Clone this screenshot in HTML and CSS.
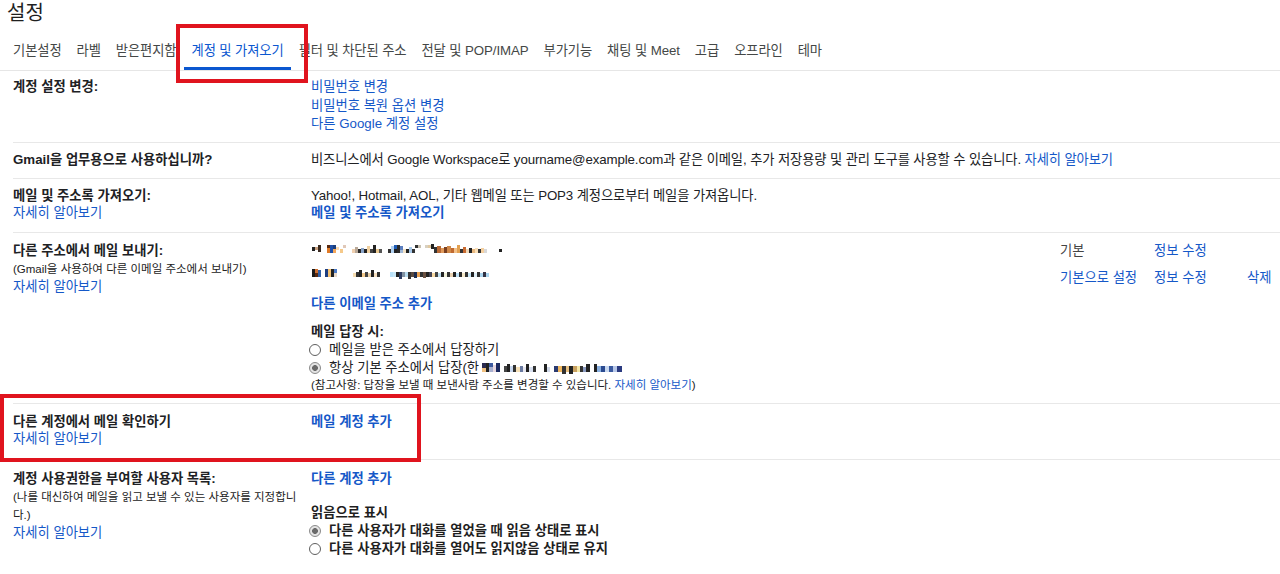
FILE: index.html
```html
<!DOCTYPE html>
<html lang="ko">
<head>
<meta charset="utf-8">
<title>설정</title>
<link rel="stylesheet" href="styles.css">
</head>
<body>
<div class="page">
  <h1 class="title">설정</h1>
  <nav class="tabs">
    <a class="tab">기본설정</a>
    <a class="tab">라벨</a>
    <a class="tab">받은편지함</a>
    <a class="tab active">계정 및 가져오기</a>
    <a class="tab">필터 및 차단된 주소</a>
    <a class="tab">전달 및 POP/IMAP</a>
    <a class="tab">부가기능</a>
    <a class="tab">채팅 및 Meet</a>
    <a class="tab">고급</a>
    <a class="tab">오프라인</a>
    <a class="tab">테마</a>
  </nav>

  <div class="rows">
    <div class="row row-first">
      <div class="label"><span class="lbl">계정 설정 변경:</span></div>
      <div class="content lines-185">
        <a class="link">비밀번호 변경</a>
        <a class="link">비밀번호 복원 옵션 변경</a>
        <a class="link">다른 Google 계정 설정</a>
      </div>
    </div>

    <div class="row">
      <div class="label"><span class="lbl">Gmail을 업무용으로 사용하십니까?</span></div>
      <div class="content">
        <p class="text">비즈니스에서 Google Workspace로 yourname@example.com과 같은 이메일, 추가 저장용량 및 관리 도구를 사용할 수 있습니다. <a class="link inline">자세히 알아보기</a></p>
      </div>
    </div>

    <div class="row row-tight">
      <div class="label">
        <span class="lbl">메일 및 주소록 가져오기:</span>
        <a class="link">자세히 알아보기</a>
      </div>
      <div class="content">
        <p class="text">Yahoo!, Hotmail, AOL, 기타 웹메일 또는 POP3 계정으로부터 메일을 가져옵니다.</p>
        <a class="link strong">메일 및 주소록 가져오기</a>
      </div>
    </div>

    <div class="row row-send">
      <div class="label">
        <span class="lbl">다른 주소에서 메일 보내기:</span>
        <span class="small">(Gmail을 사용하여 다른 이메일 주소에서 보내기)</span>
        <a class="link">자세히 알아보기</a>
      </div>
      <div class="content">
        <div class="sendas">
          <span class="addr">
            <svg class="mosaic" width="194" height="18" viewBox="0 0 194 18">
              <g transform="translate(0,1)">
              <rect x="1" y="4" width="3" height="4" fill="#222"/><rect x="4" y="4" width="3" height="3" fill="#c8a080"/><rect x="7" y="2" width="3" height="7" fill="#3a2a20"/>
              <rect x="16" y="2" width="3" height="3" fill="#5a2a10"/><rect x="16" y="5" width="3" height="5" fill="#e07b28"/><rect x="19" y="2" width="3" height="8" fill="#1f50a8"/><rect x="22" y="2" width="3" height="4" fill="#1b3f7d"/><rect x="22" y="6" width="3" height="4" fill="#f4a65a"/><rect x="25" y="4" width="3" height="3" fill="#f8d8b0"/>
              <rect x="29" y="6" width="3" height="4" fill="#f5c98a"/><rect x="32" y="2" width="3" height="3" fill="#e0c8b8"/>
              <rect x="41" y="6" width="3" height="4" fill="#f0d0b0"/><rect x="44" y="4" width="3" height="6" fill="#b8a898"/><rect x="47" y="6" width="3" height="4" fill="#2a2a2a"/><rect x="50" y="5" width="3" height="5" fill="#8aa4c8"/><rect x="53" y="6" width="3" height="4" fill="#222"/><rect x="56" y="3" width="3" height="7" fill="#f0d0a0"/><rect x="59" y="6" width="3" height="4" fill="#444"/><rect x="62" y="2" width="3" height="8" fill="#222"/><rect x="65" y="6" width="3" height="4" fill="#e9c890"/><rect x="68" y="6" width="3" height="4" fill="#555"/>
              <rect x="77" y="6" width="3" height="4" fill="#333"/><rect x="80" y="3" width="3" height="7" fill="#b0d0f0"/><rect x="83" y="2" width="3" height="4" fill="#1e5bb5"/><rect x="83" y="6" width="3" height="4" fill="#222"/><rect x="86" y="2" width="3" height="8" fill="#2a2a2a"/><rect x="89" y="3" width="3" height="4" fill="#5d80c0"/><rect x="89" y="7" width="3" height="3" fill="#a0b8d8"/><rect x="92" y="6" width="3" height="4" fill="#f3e3c8"/><rect x="95" y="6" width="3" height="4" fill="#222"/><rect x="98" y="4" width="3" height="6" fill="#a8c8e8"/><rect x="101" y="6" width="3" height="4" fill="#333"/>
              <rect x="104" y="2" width="3" height="3" fill="#333"/><rect x="107" y="2" width="3" height="3" fill="#c8c0b0"/>
              <rect x="114" y="2" width="3" height="3" fill="#d8d0c0"/><rect x="117" y="2" width="3" height="3" fill="#e0c8a0"/><rect x="120" y="1" width="3" height="5" fill="#222"/>
              <rect x="123" y="4" width="3" height="6" fill="#333"/><rect x="126" y="3" width="4" height="7" fill="#b86a36"/><rect x="130" y="5" width="3" height="5" fill="#e09a5c"/><rect x="133" y="4" width="3" height="6" fill="#7a4020"/><rect x="136" y="3" width="4" height="7" fill="#d08848"/><rect x="140" y="5" width="3" height="5" fill="#c06a30"/><rect x="143" y="5" width="3" height="5" fill="#f3c088"/><rect x="146" y="2" width="3" height="8" fill="#e2a050"/><rect x="149" y="6" width="3" height="4" fill="#333"/><rect x="152" y="4" width="3" height="6" fill="#c86a30"/><rect x="155" y="6" width="3" height="4" fill="#f0d8b8"/><rect x="158" y="5" width="3" height="5" fill="#222"/><rect x="161" y="6" width="3" height="4" fill="#e8b880"/><rect x="164" y="5" width="3" height="5" fill="#fbe0b8"/><rect x="167" y="6" width="3" height="4" fill="#333"/><rect x="170" y="5" width="3" height="5" fill="#f5d0a0"/><rect x="173" y="6" width="3" height="4" fill="#d8d8d8"/>
              <rect x="188" y="6" width="3" height="3" fill="#222"/>
              </g>
            </svg>
          </span>
          <span class="status">기본</span>
          <a class="link">정보 수정</a>
          <span></span>

          <span class="addr">
            <svg class="mosaic" width="180" height="18" viewBox="0 0 180 18">
              <g transform="translate(0,-1)">
              <rect x="1" y="1" width="3" height="8" fill="#1a1a1a"/><rect x="4" y="1" width="3" height="4" fill="#d07030"/><rect x="4" y="5" width="3" height="4" fill="#5a2a10"/><rect x="7" y="2" width="3" height="7" fill="#3060a8"/>
              <rect x="14" y="1" width="3" height="8" fill="#1e3e80"/><rect x="17" y="1" width="3" height="8" fill="#f3c070"/><rect x="20" y="1" width="3" height="8" fill="#222"/><rect x="23" y="1" width="3" height="4" fill="#4a7ac8"/><rect x="23" y="5" width="3" height="4" fill="#e8d8c8"/>
              <rect x="42" y="5" width="3" height="4" fill="#f5dcb0"/><rect x="45" y="4" width="3" height="5" fill="#333"/><rect x="48" y="2" width="3" height="7" fill="#222"/><rect x="51" y="5" width="3" height="4" fill="#f2c88a"/><rect x="54" y="4" width="3" height="5" fill="#444"/><rect x="57" y="5" width="3" height="4" fill="#e8d0a8"/><rect x="60" y="2" width="3" height="7" fill="#222"/><rect x="63" y="5" width="3" height="4" fill="#f7e0c0"/><rect x="66" y="4" width="3" height="5" fill="#333"/>
              <rect x="79" y="4" width="3" height="5" fill="#b8e0f8"/><rect x="82" y="4" width="3" height="5" fill="#c8e8f8"/><rect x="85" y="4" width="3" height="5" fill="#222"/><rect x="88" y="4" width="3" height="7" fill="#2a3a60"/><rect x="91" y="4" width="3" height="5" fill="#8090a0"/><rect x="94" y="4" width="3" height="5" fill="#b8dcf0"/><rect x="97" y="4" width="3" height="7" fill="#333"/><rect x="100" y="4" width="3" height="5" fill="#5a4a40"/><rect x="103" y="4" width="3" height="6" fill="#1c2c50"/><rect x="106" y="4" width="3" height="5" fill="#e8a050"/><rect x="109" y="4" width="3" height="5" fill="#333"/><rect x="112" y="4" width="3" height="6" fill="#6a5040"/><rect x="115" y="4" width="3" height="5" fill="#222"/><rect x="118" y="4" width="3" height="5" fill="#445"/><rect x="121" y="5" width="3" height="4" fill="#f8d8a0"/><rect x="124" y="4" width="3" height="5" fill="#444"/><rect x="127" y="5" width="3" height="4" fill="#c0e0f0"/><rect x="130" y="4" width="3" height="5" fill="#222"/><rect x="133" y="5" width="3" height="4" fill="#f0f0d8"/><rect x="136" y="4" width="3" height="5" fill="#333"/><rect x="139" y="5" width="3" height="4" fill="#e8d0b0"/><rect x="142" y="4" width="3" height="5" fill="#222"/><rect x="145" y="5" width="3" height="4" fill="#bde0f5"/><rect x="148" y="4" width="3" height="5" fill="#2a2a2a"/><rect x="151" y="5" width="3" height="4" fill="#f5e8c8"/><rect x="154" y="4" width="3" height="5" fill="#333"/><rect x="157" y="5" width="3" height="4" fill="#c8e8f8"/><rect x="160" y="4" width="3" height="5" fill="#222"/><rect x="163" y="5" width="3" height="4" fill="#e0f0f8"/><rect x="166" y="4" width="3" height="5" fill="#333"/><rect x="169" y="5" width="3" height="4" fill="#aad4ee"/><rect x="172" y="4" width="3" height="5" fill="#334"/><rect x="175" y="5" width="3" height="4" fill="#aad4ee"/>
              </g>
            </svg>
          </span>
          <a class="link">기본으로 설정</a>
          <a class="link">정보 수정</a>
          <a class="link">삭제</a>
        </div>

        <a class="link strong add-email">다른 이메일 주소 추가</a>

        <div class="reply">
          <span class="lbl">메일 답장 시:</span>
          <label class="radio"><span class="dot"></span>메일을 받은 주소에서 답장하기</label>
          <label class="radio"><span class="dot checked"></span>항상 기본 주소에서 답장(한<svg class="mosaic inline-mosaic" width="142" height="12" viewBox="0 0 142 12">
              <rect x="0" y="1" width="4" height="5" fill="#2a2a50"/><rect x="0" y="6" width="4" height="4" fill="#f0c080"/><rect x="4" y="1" width="3" height="9" fill="#222"/><rect x="7" y="1" width="4" height="4" fill="#3c5aa0"/><rect x="7" y="5" width="4" height="5" fill="#a8b0d0"/><rect x="11" y="3" width="3" height="7" fill="#e8d8e0"/><rect x="14" y="1" width="4" height="9" fill="#1c2a60"/>
              <rect x="22" y="4" width="3" height="6" fill="#444"/><rect x="25" y="2" width="3" height="8" fill="#222"/><rect x="28" y="4" width="3" height="6" fill="#c8d8f0"/><rect x="31" y="3" width="3" height="7" fill="#333"/><rect x="34" y="5" width="4" height="5" fill="#f5e0b8"/><rect x="38" y="4" width="3" height="6" fill="#6a7aa0"/><rect x="41" y="5" width="3" height="5" fill="#e8e8f0"/><rect x="44" y="2" width="3" height="8" fill="#222"/><rect x="47" y="5" width="4" height="5" fill="#d8e0f0"/><rect x="51" y="4" width="3" height="6" fill="#333"/>
              <rect x="62" y="2" width="3" height="8" fill="#222"/><rect x="65" y="5" width="3" height="5" fill="#d0d8e8"/>
              <rect x="72" y="4" width="4" height="6" fill="#2a3a70"/><rect x="76" y="4" width="4" height="6" fill="#f0b860"/><rect x="80" y="4" width="4" height="8" fill="#333"/><rect x="84" y="4" width="3" height="6" fill="#e8c080"/><rect x="87" y="4" width="4" height="8" fill="#222"/><rect x="91" y="4" width="4" height="6" fill="#c8a060"/><rect x="95" y="4" width="3" height="6" fill="#f5e8a8"/><rect x="98" y="4" width="3" height="6" fill="#333"/><rect x="101" y="5" width="3" height="5" fill="#8a9ac0"/><rect x="104" y="2" width="4" height="8" fill="#222"/>
              <rect x="112" y="2" width="3" height="8" fill="#222"/><rect x="115" y="4" width="4" height="6" fill="#8ab0e0"/><rect x="119" y="4" width="4" height="6" fill="#2a4a90"/><rect x="123" y="4" width="4" height="6" fill="#c8d8f0"/><rect x="127" y="4" width="4" height="6" fill="#3a5aa0"/><rect x="131" y="4" width="4" height="6" fill="#b8c8e8"/><rect x="135" y="4" width="5" height="6" fill="#2a3a80"/>
            </svg></label>
          <span class="small note">(참고사항: 답장을 보낼 때 보낸사람 주소를 변경할 수 있습니다. <a class="link inline">자세히 알아보기</a>)</span>
        </div>
      </div>
    </div>

    <div class="row row-tight row-check">
      <div class="label">
        <span class="lbl">다른 계정에서 메일 확인하기</span>
        <a class="link">자세히 알아보기</a>
      </div>
      <div class="content">
        <a class="link strong">메일 계정 추가</a>
      </div>
    </div>

    <div class="row row-last">
      <div class="label">
        <span class="lbl">계정 사용권한을 부여할 사용자 목록:</span>
        <span class="small">(나를 대신하여 메일을 읽고 보낼 수 있는 사용자를 지정합니<br>다.)</span>
        <a class="link">자세히 알아보기</a>
      </div>
      <div class="content">
        <a class="link strong">다른 계정 추가</a>
        <div class="markread">
          <span class="sub-h">읽음으로 표시</span>
          <label class="radio semi"><span class="dot checked"></span>다른 사용자가 대화를 열었을 때 읽음 상태로 표시</label>
          <label class="radio semi"><span class="dot"></span>다른 사용자가 대화를 열어도 읽지않음 상태로 유지</label>
        </div>
      </div>
    </div>
  </div>

  <div class="annot annot-tab"></div>
  <div class="annot annot-row"></div>
</div>
</body>
</html>
```

FILE: styles.css
```css
* { box-sizing: border-box; }

body {
  margin: 0;
  background: #fff;
  font-family: "Liberation Sans", "Noto Sans CJK KR", sans-serif;
  font-size: 13.3px;
  color: #202124;
}

.page {
  position: relative;
  width: 1280px;
  height: 574px;
  overflow: hidden;
}

.title {
  margin: 0;
  padding-left: 7px;
  font-size: 20px;
  font-weight: 400;
  line-height: 26px;
  color: #1f1f1f;
}

.tabs {
  display: flex;
  padding-left: 5.5px;
  border-bottom: 1px solid #e6e6e6;
}

.tab {
  padding: 16px 7.5px 7px;
  line-height: 18px;
  border-bottom: 3px solid transparent;
  color: #444746;
  white-space: nowrap;
  letter-spacing: -0.1px;
}

.tab.active {
  color: #0b57d0;
  border-bottom-color: #0b57d0;
}

.rows {
  padding-left: 13px;
}

.row {
  display: grid;
  grid-template-columns: 298px 1fr;
  padding: 8px 0 9px;
  border-bottom: 1px solid #e8e8e8;
  line-height: 18px;
}

.row-first { padding-top: 7px; padding-bottom: 8px; }
.row-send { padding-top: 9px; }
.row-last { border-bottom: none; padding-top: 10px; }

.label, .content {
  display: flex;
  flex-direction: column;
  align-items: flex-start;
}

.lines-185 { line-height: 18.5px; }

.row-tight { line-height: 17px; padding-bottom: 11px; }
.row-check { padding-top: 9px; padding-bottom: 12px; }

.lbl {
  font-weight: 700;
  color: #202124;
}

.small {
  font-size: 11.5px;
  color: #222;
}

.text {
  margin: 0;
  white-space: nowrap;
  letter-spacing: -0.12px;
}

.link {
  color: #1558c8;
  cursor: pointer;
  white-space: nowrap;
}

.link.strong { font-weight: 700; }

.sendas {
  display: grid;
  grid-template-columns: 749px 94px 93px auto;
  row-gap: 9px;
  width: 100%;
}

.status { color: #444; }

.mosaic { display: block; }

.inline-mosaic {
  display: inline-block;
  vertical-align: -1px;
  margin-left: 3px;
}

.add-email { margin-top: 8px; }

.reply {
  display: flex;
  flex-direction: column;
  align-items: flex-start;
  margin-top: 10px;
}

.radio {
  display: flex;
  align-items: center;
  white-space: nowrap;
  color: #202124;
}

.radio.semi { font-weight: 700; color: #1f1f1f; }

.dot {
  width: 12px;
  height: 12px;
  margin-left: -2px;
  margin-right: 8px;
  border: 1px solid #5f5f5f;
  border-radius: 50%;
  background: #fff;
  flex: none;
}

.dot.checked {
  border-color: #8a8a8a;
  background: radial-gradient(circle, #6a6a6a 0 2.6px, #e4e4e4 3.2px);
}

.note { line-height: 17px; }

.markread {
  display: flex;
  flex-direction: column;
  align-items: flex-start;
  margin-top: 16px;
}

.sub-h {
  font-weight: 700;
  color: #1f1f1f;
}

.annot {
  position: absolute;
  border: 4px solid #e0141e;
  pointer-events: none;
}

.annot-tab {
  left: 176px;
  top: 24px;
  width: 132px;
  height: 59px;
}

.annot-row {
  left: 0;
  top: 394px;
  width: 421px;
  height: 68px;
}
```
